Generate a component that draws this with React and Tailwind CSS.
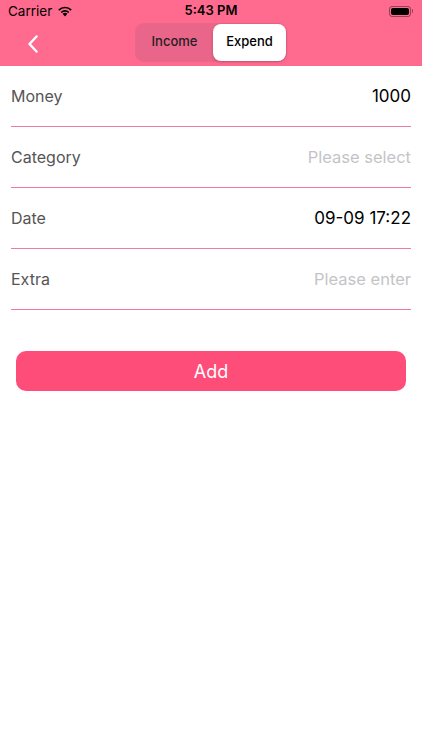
export default function App() {
  const font = { fontFamily: '"Inter", "Liberation Sans", sans-serif' };
  const rows = [
    { label: "Money", value: "1000", ph: false },
    { label: "Category", value: "Please select", ph: true },
    { label: "Date", value: "09-09 17:22", ph: false },
    { label: "Extra", value: "Please enter", ph: true },
  ];
  return (
    <div className="w-[422px] h-[750px] bg-white" style={font}>
      <div className="bg-[#ff6b8f] h-[66px] flex flex-col">
        <div className="h-[22px] flex items-center justify-between px-[8px] relative">
          <div className="flex items-center gap-[5px] text-[13.5px] text-black">
            <span>Carrier</span>
            <svg width="16" height="12" viewBox="0 0 16 12">
              <path d="M8 11.5 L5.6 8.8 A3.5 3.5 0 0 1 10.4 8.8 Z" fill="#000" />
              <path d="M3.6 6.9 A6.3 6.3 0 0 1 12.4 6.9 L11.2 8.1 A4.6 4.6 0 0 0 4.8 8.1 Z" fill="#000" />
              <path d="M1.2 4.5 A9.6 9.6 0 0 1 14.8 4.5 L13.6 5.7 A7.9 7.9 0 0 0 2.4 5.7 Z" fill="#000" />
            </svg>
          </div>
          <span className="absolute left-1/2 -translate-x-1/2 text-[13px] font-semibold text-black">5:43 PM</span>
          <div className="flex items-center mr-[1px]">
            <div className="w-[22px] h-[11px] rounded-[3px] border border-[#00000066] p-[1px]">
              <div className="w-full h-full rounded-[2px] bg-black" />
            </div>
            <div className="w-[1.5px] h-[4px] bg-[#00000066] ml-[1px] rounded-r" />
          </div>
        </div>
        <div className="flex-1 flex items-center relative">
          <svg className="absolute left-[27px] top-[13px]" width="12" height="18" viewBox="0 0 12 18">
            <path d="M9.5 1.5 L2.5 9 L9.5 16.5" stroke="#fff" strokeWidth="2.4" fill="none" strokeLinecap="round" strokeLinejoin="round" />
          </svg>
          <div className="ml-[135px] mt-[-4px] w-[152px] h-[39px] rounded-[9px] bg-[#e9658a] flex items-center p-[1px]">
            <div className="flex-1 text-center text-[13px] font-medium text-[#222]">Income</div>
            <div className="w-[73px] h-[37px] rounded-[8px] bg-white shadow-[0_1px_3px_rgba(0,0,0,0.2)] flex items-center justify-center text-[13px] font-medium text-black">Expend</div>
          </div>
        </div>
      </div>
      <div className="px-[11px]">
        {rows.map((r) => (
          <div key={r.label} className="h-[61px] border-b border-[#ef7c9a] flex justify-between pt-[19px]">
            <span className="text-[16px] text-[#555] leading-[22px]">{r.label}</span>
            <span className={`leading-[22px] ${r.ph ? "text-[16.5px] text-[#c4c4c6]" : "text-[17px] text-black"}`}>{r.value}</span>
          </div>
        ))}
      </div>
      <div className="px-[16px] mt-[41px]">
        <div className="h-[40px] rounded-[10px] bg-[#ff4d79] flex items-center justify-center text-white text-[18px]">Add</div>
      </div>
    </div>
  );
}
